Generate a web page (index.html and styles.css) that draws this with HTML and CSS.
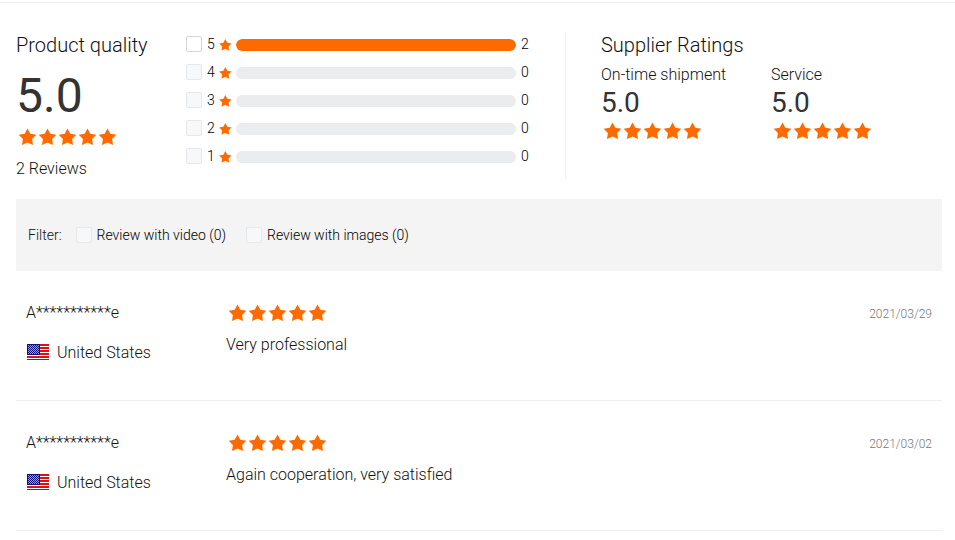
FILE: index.html
```html
<!DOCTYPE html>
<html lang="en">
<head>
    <meta charset="UTF-8">
    <meta name="viewport" content="width=device-width, initial-scale=1.0">
    <title>Reviews</title>
    <link rel="stylesheet" href="styles.css">
</head>
<body>
    <!-- shared icons -->
    <svg class="icons" aria-hidden="true">
        <symbol id="star" viewBox="0 0 20 20">
            <path d="M10.500 1.500l2.800 5.300 6 1-4.200 4.300.9 6-5.500-2.700L5 18.100l.9-6L1.700 7.800l6-1z"/>
        </symbol>
        <symbol id="stars" viewBox="0 0 100 20">
            <use href="#star" width="20" height="20"/>
            <use href="#star" x="20" width="20" height="20"/>
            <use href="#star" x="40" width="20" height="20"/>
            <use href="#star" x="60" width="20" height="20"/>
            <use href="#star" x="80" width="20" height="20"/>
        </symbol>
        <pattern id="flag-stars" width="2" height="2" patternUnits="userSpaceOnUse">
            <rect width="2" height="2" fill="#10107c"/>
            <rect width="1" height="1" fill="#9c9cd4"/>
            <rect x="1" y="1" width="1" height="1" fill="#9c9cd4"/>
        </pattern>
        <symbol id="flag-us" viewBox="0 0 22 16">
            <rect width="22" height="16" fill="#fff"/>
            <path d="M0 1h22M0 4h22M0 7h22M0 10h22M0 13h22" stroke="#e01010" stroke-width="2"/>
            <path d="M0 15.500h22" stroke="#a01818"/>
            <rect width="13" height="11" fill="#10107c"/>
            <rect x="1" y="1" width="11" height="9" fill="url(#flag-stars)"/>
        </symbol>
    </svg>

    <main class="reviews">
        <section class="summary">
            <div class="quality">
                <h2>Product quality</h2>
                <div class="score">5.0</div>
                <svg class="stars" role="img" aria-label="5 stars"><use href="#stars"/></svg>
                <p class="count">2 Reviews</p>
            </div>

            <div class="breakdown">
                <div class="bar-row">
                    <label><input type="checkbox"> 5</label>
                    <svg class="star"><use href="#star"/></svg>
                    <div class="bar"><div class="bar-fill" style="width: 100%"></div></div>
                    <span>2</span>
                </div>
                <div class="bar-row">
                    <label><input type="checkbox" disabled> 4</label>
                    <svg class="star"><use href="#star"/></svg>
                    <div class="bar"></div>
                    <span>0</span>
                </div>
                <div class="bar-row">
                    <label><input type="checkbox" disabled> 3</label>
                    <svg class="star"><use href="#star"/></svg>
                    <div class="bar"></div>
                    <span>0</span>
                </div>
                <div class="bar-row">
                    <label><input type="checkbox" disabled> 2</label>
                    <svg class="star"><use href="#star"/></svg>
                    <div class="bar"></div>
                    <span>0</span>
                </div>
                <div class="bar-row">
                    <label><input type="checkbox" disabled> 1</label>
                    <svg class="star"><use href="#star"/></svg>
                    <div class="bar"></div>
                    <span>0</span>
                </div>
            </div>

            <div class="supplier">
                <h2>Supplier Ratings</h2>
                <div class="supplier-scores">
                    <div>
                        <h3>On-time shipment</h3>
                        <div class="score-small">5.0</div>
                        <svg class="stars" role="img" aria-label="5 stars"><use href="#stars"/></svg>
                    </div>
                    <div>
                        <h3>Service</h3>
                        <div class="score-small">5.0</div>
                        <svg class="stars" role="img" aria-label="5 stars"><use href="#stars"/></svg>
                    </div>
                </div>
            </div>
        </section>

        <div class="filter">
            <span class="filter-title">Filter:</span>
            <label><input type="checkbox" disabled> Review with video (0)</label>
            <label><input type="checkbox" disabled> Review with images (0)</label>
        </div>

        <article class="review">
            <div class="author">
                <div>A***********e</div>
                <div class="country"><svg class="flag"><use href="#flag-us"/></svg>United States</div>
            </div>
            <div class="content">
                <svg class="stars" role="img" aria-label="5 stars"><use href="#stars"/></svg>
                <p>Very professional</p>
            </div>
            <time datetime="2021-03-29">2021/03/29</time>
        </article>

        <article class="review">
            <div class="author">
                <div>A***********e</div>
                <div class="country"><svg class="flag"><use href="#flag-us"/></svg>United States</div>
            </div>
            <div class="content">
                <svg class="stars" role="img" aria-label="5 stars"><use href="#stars"/></svg>
                <p>Again cooperation, very satisfied</p>
            </div>
            <time datetime="2021-03-02">2021/03/02</time>
        </article>
    </main>
</body>
</html>
```
FILE: styles.css
```css
:root {
    --orange: #ff6a00;
    --heading: #333;
    --text: #111;
    --line: #efefef;
}

* {
    box-sizing: border-box;
    margin: 0;
    padding: 0;
}

body {
    font-family: Roboto, sans-serif;
    font-size: 16px;
    font-weight: 300;
    line-height: 24px;
    color: var(--text);
    background: #fff;
    padding-top: 2px;
}

.icons {
    position: absolute;
    width: 0;
    height: 0;
}

.reviews {
    border-top: 1px solid var(--line);
    padding: 29px 13px 0 16px;
}

h2 {
    font-size: 20px;
    font-weight: 300;
    line-height: 26px;
}

h3 {
    font-size: 16px;
    font-weight: 300;
    line-height: 20px;
}

.stars {
    display: block;
    width: 100px;
    height: 20px;
    fill: var(--orange);
}

/* rating summary */
.summary {
    display: flex;
    margin-bottom: 20px;
}

.quality {
    width: 170px;
    flex-shrink: 0;
}

.score,
.score-small {
    font-weight: 400;
    color: var(--heading);
}

.score {
    font-size: 48px;
    line-height: 56px;
    margin: 10px 0 3px;
}

.quality .stars,
.supplier .stars {
    margin-left: 1px;
}

.count {
    line-height: 20px;
    margin-top: 12px;
}

.breakdown {
    width: 380px;
    flex-shrink: 0;
    border-right: 1px solid var(--line);
}

.bar-row {
    display: flex;
    align-items: center;
    height: 28px;
    font-size: 14px;
    color: #000;
}

.breakdown .bar-row:first-child {
    height: 24px;
    margin-bottom: 2px;
}

.bar-row label {
    display: flex;
    align-items: center;
    gap: 5px;
    width: 32px;
}

input[type="checkbox"] {
    appearance: none;
    width: 16px;
    height: 16px;
    border: 1px solid #d5d5d5;
    border-radius: 2px;
    background: #fff;
}

input[type="checkbox"]:disabled {
    border-color: #e6e8ea;
    background: #f7f8fa;
}

.star {
    width: 14px;
    height: 14px;
    margin-top: 1px;
    fill: var(--orange);
}

.bar {
    width: 280px;
    height: 12px;
    margin: 2px 5px 0 4px;
    border-radius: 6px;
    background: #ebecee;
    overflow: hidden;
}

.bar-fill {
    height: 100%;
    border-radius: 6px;
    background: var(--orange);
}

.supplier {
    flex: 1;
    padding-left: 35px;
}

.supplier-scores {
    display: grid;
    grid-template-columns: 170px 1fr;
    margin-top: 7px;
}

.score-small {
    font-size: 28px;
    line-height: 32px;
    margin: 2px 0;
}

/* filter bar */
.filter {
    display: flex;
    align-items: center;
    gap: 20px;
    height: 72px;
    padding: 0 12px;
    background: #f4f4f4;
    font-size: 14px;
}

.filter-title {
    margin-right: -6px;
}

.filter label {
    display: flex;
    align-items: center;
    gap: 5px;
    color: #000;
}

/* review list */
.review {
    display: flex;
    padding: 30px 10px 35px;
    border-bottom: 1px solid var(--line);
}

.author {
    width: 200px;
    flex-shrink: 0;
}

.country {
    display: flex;
    align-items: center;
    gap: 8px;
    margin-top: 16px;
}

.flag {
    width: 22px;
    height: 16px;
    margin: 0 0 3px 1px;
}

.content {
    flex: 1;
}

.content .stars {
    margin: 2px 0 10px 1px;
}

.review time {
    font-size: 12px;
    line-height: 26px;
    color: #777;
}
```
